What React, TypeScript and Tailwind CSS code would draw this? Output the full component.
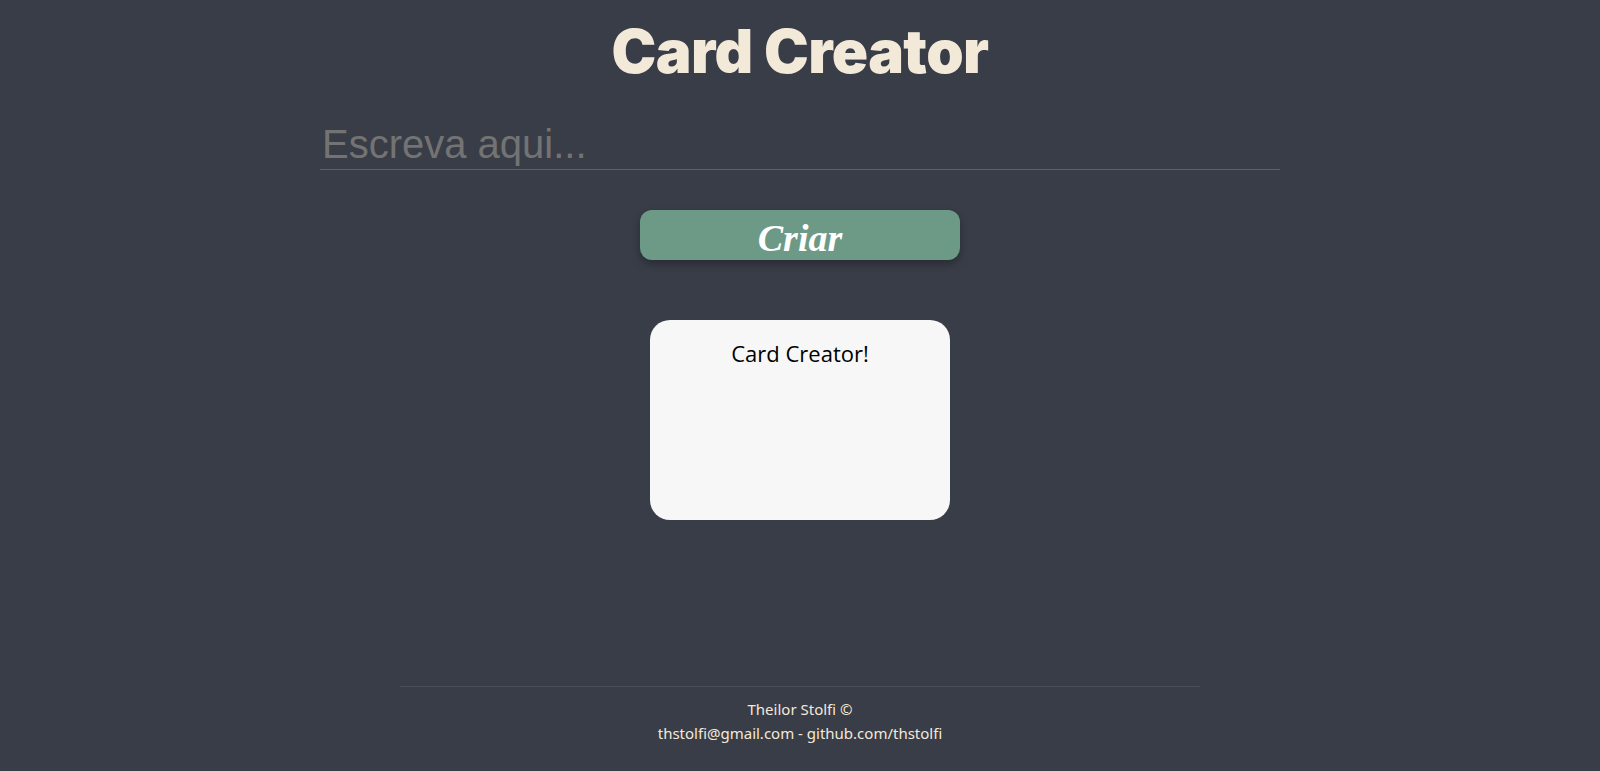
export default function App() {
  return (
    <div className="min-h-screen w-full bg-[#393d47] flex flex-col items-center">
      <h1 className="mt-[18px] text-[60px] leading-[66px] font-black text-[#f3e9d9] tracking-[-0.01em] font-['Inter','Noto_Sans',sans-serif]">
        Card Creator
      </h1>

      <input
        type="text"
        placeholder="Escreva aqui..."
        className="mt-[36px] w-[960px] h-[50px] bg-transparent border-b border-[#5d6069] text-[40px] leading-none text-[#ddd] placeholder:text-[#737373] outline-none px-[2px] font-['Liberation_Sans',Arial,sans-serif]"
      />

      <button className="mt-[40px] w-[320px] h-[50px] rounded-[12px] bg-[#6c9a87] text-white text-[38px] italic font-bold shadow-[0_4px_8px_rgba(0,0,0,0.3)] font-['Liberation_Serif','DejaVu_Serif',serif]">
        Criar
      </button>

      {/* Card preview */}
      <div className="mt-[60px] w-[300px] h-[200px] rounded-[20px] bg-[#f7f7f7] flex justify-center pt-[18px]">
        <p className="text-[22px] leading-[30px] text-black font-['Open_Sans',sans-serif]">
          Card Creator!
        </p>
      </div>

      <footer className="mt-auto w-[800px] border-t border-[#4a4e57] pt-[10px] pb-[26px] flex flex-col items-center text-[15px] leading-[24px] text-[#f3e9d9] font-['Noto_Sans',sans-serif]">
        <p>Theilor Stolfi ©</p>
        <p>thstolfi@gmail.com - github.com/thstolfi</p>
      </footer>
    </div>
  )
}
